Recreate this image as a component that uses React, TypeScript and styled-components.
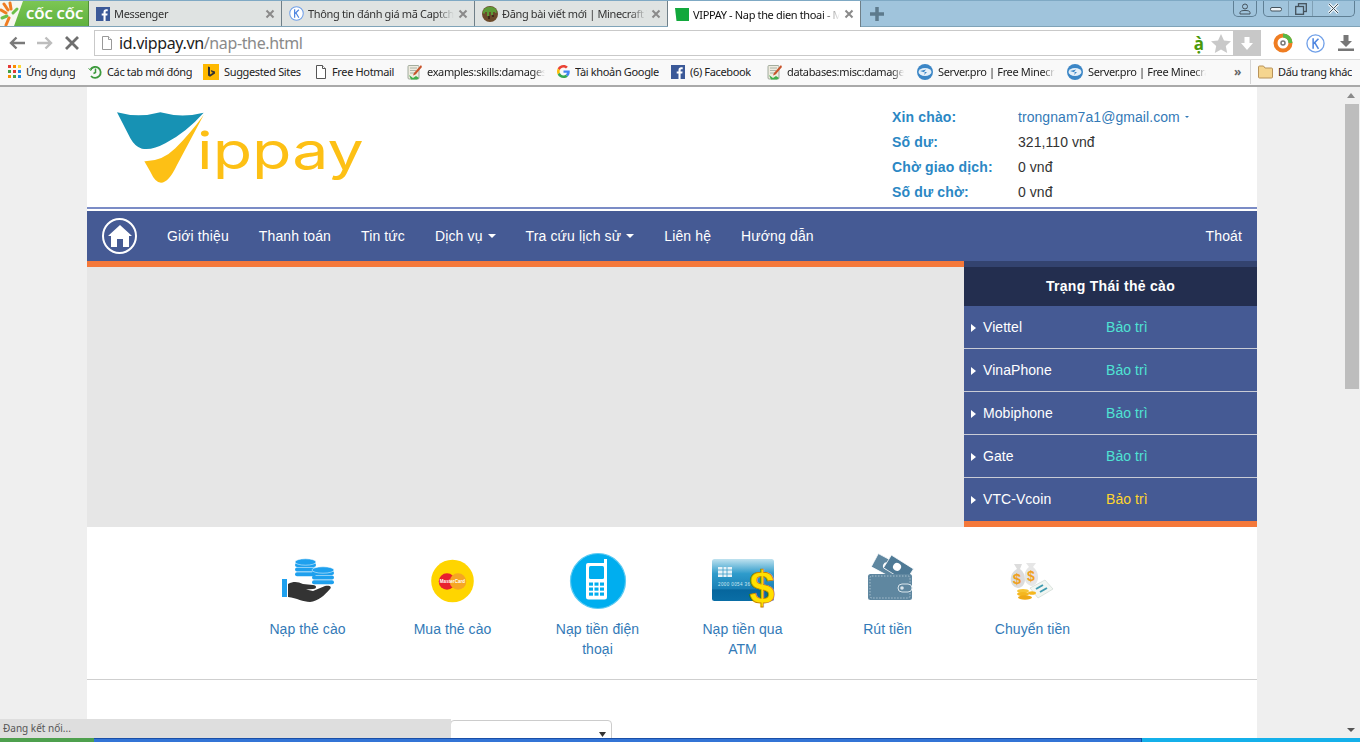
import React from "react";
import styled, { createGlobalStyle } from "styled-components";

const Global = createGlobalStyle`
  html, body { margin: 0; padding: 0; height: 100%; overflow: hidden; background: #efefef; }
  * { box-sizing: border-box; }
`;

const uiFont = `"Noto Sans", "Liberation Sans", sans-serif`;
const pageFont = `"Liberation Sans", Arial, sans-serif`;

const Screen = styled.div`
  position: relative; width: 1360px; height: 742px; overflow: hidden;
  display: flex; flex-direction: column; background: #efefef;
`;

/* ---------- browser chrome ---------- */
const TabStrip = styled.div`
  height: 27px; flex: none; display: flex; background: #a0c4dc;
  border-top: 1px solid #7fa9c4; border-bottom: 1px solid #7fa3b8;
`;
const Brand = styled.div`
  width: 89px; flex: none; display: flex; align-items: center; gap: 3px; padding-left: 0;
  background: linear-gradient(#7cc653, #5fb13f); border-right: 1px solid #4f8f38;
`;
const BrandName = styled.span`
  font: bold 13px ${uiFont}; color: #fff; white-space: nowrap; letter-spacing: 0.1px;
`;
const Tab = styled.div<{ $active?: boolean }>`
  width: 193px; flex: none; display: flex; align-items: center; padding: 0 6px 0 7px; gap: 4px;
  background: ${(p) => (p.$active ? "#ffffff" : "#dfe3e2")};
  border-right: 1px solid #6f7f88; height: ${(p) => (p.$active ? "26px" : "25px")};
  font: 11px ${uiFont}; letter-spacing: -0.35px; color: ${(p) => (p.$active ? "#111" : "#333")};
`;
const TabTitle = styled.span`
  flex: 1; min-width: 0; white-space: nowrap; overflow: hidden;
  -webkit-mask-image: linear-gradient(90deg, #000 88%, transparent);
  mask-image: linear-gradient(90deg, #000 88%, transparent);
`;
const Plus = styled.div`
  width: 32px; height: 25px; display: flex; align-items: center; justify-content: center;
`;
const WinControls = styled.div`
  margin-left: auto; display: flex; padding-right: 5px; align-items: flex-start; gap: 6px;
`;
const WinGroup = styled.div`
  display: flex; height: 16px; border: 1px solid #5f7f94; border-top: none;
  border-radius: 0 0 5px 5px;
`;
const WinButton = styled.div<{ $w: number }>`
  width: ${(p) => p.$w}px; display: flex; align-items: center; justify-content: center;
  & + & { border-left: 1px solid #7f9fb4; }
`;

const AddressRow = styled.div`
  height: 32px; flex: none; display: flex; align-items: center; background: #fff; padding-right: 0;
`;
const NavGlyphs = styled.div`
  width: 94px; flex: none; display: flex; align-items: center; padding-left: 8px; gap: 10px;
`;
const AddressBox = styled.div`
  width: 1167px; height: 26px; flex: none; display: flex; align-items: center;
  border: 1px solid #c9c9c9; border-right: none; padding-left: 6px; background: #fff;
`;
const Url = styled.div`
  margin-left: 6px; font: 16px ${uiFont}; color: #222; letter-spacing: -0.36px;
  span { color: #8a8a8a; }
`;
const Ime = styled.span`
  margin-left: auto; font: bold 17px ${uiFont}; color: #4c9a0a; line-height: 1; margin-right: 7px;
`;
const GreyDown = styled.div`
  width: 28px; height: 26px; margin-left: 2px; margin-top: -1px; margin-bottom: -1px;
  background: #c8c8c8; display: flex; align-items: center; justify-content: center;
`;
const RightIcons = styled.div`
  flex: 1; display: flex; align-items: center; padding-left: 12px; gap: 13px;
`;

const BookmarkBar = styled.div`
  height: 28px; flex: none; display: flex; align-items: center; padding: 0 0 2px 8px;
  background: #f9f9f9; border-top: 1px solid #dcdcdc; border-bottom: 2px solid #a9a9a9;
  font: 11px ${uiFont}; letter-spacing: -0.35px; color: #222;
`;
const Bookmark = styled.div<{ $w: number; $tw?: number }>`
  width: ${(p) => p.$w}px; flex: none; display: flex; align-items: center; gap: 5px;
  span {
    white-space: nowrap; overflow: hidden;
    ${(p) => p.$tw ? `width: ${p.$tw}px; -webkit-mask-image: linear-gradient(90deg,#000 90%,transparent); mask-image: linear-gradient(90deg,#000 90%,transparent);` : ""}
  }
  svg { flex: none; }
`;
const Chevrons = styled.div`
  width: 16px; flex: none; font: bold 12px ${uiFont}; color: #666; margin-left: 21px;
`;
const Divider = styled.div`
  width: 1px; height: 24px; background: #d5d5d5; margin-right: 7px; flex: none;
`;

/* ---------- viewport ---------- */
const Viewport = styled.div`
  flex: 1; min-height: 0; display: flex; overflow: hidden;
`;
const PageArea = styled.div`
  flex: 1; min-width: 0; overflow: hidden; padding-left: 87px;
`;
const Page = styled.div`
  width: 1170px; background: #fff; font: 14px ${pageFont}; letter-spacing: 0.06px;
  min-height: 700px;
`;
const Header = styled.header`
  height: 122px; display: flex; justify-content: space-between;
  border-bottom: 2px solid #7b8cc6;
`;
const LogoMark = styled.svg`
  width: 300px; height: 120px; margin-top: 3px; flex: none;
`;
const UserInfo = styled.dl`
  width: 365px; margin: 17px 0 0; display: grid; grid-template-columns: 126px 1fr;
  grid-auto-rows: 25px; align-items: center;
`;
const InfoLabel = styled.dt`
  font-weight: bold; color: #2a87c4; letter-spacing: 0.15px;
`;
const InfoValue = styled.dd<{ $link?: boolean }>`
  margin: 0; color: ${(p) => (p.$link ? "#337ab7" : "#333")};
  display: flex; align-items: center; gap: 5px;
`;
const TinyCaret = styled.i`
  width: 0; height: 0; border: 2px solid transparent; border-top: 2px solid #337ab7; margin-top: 3px;
`;
const NavBar = styled.nav`
  margin-top: 2px; height: 50px; display: flex; align-items: center; padding-left: 15px;
  background: #455a94; color: #fff; letter-spacing: 0.13px;
`;
const HomeBadge = styled.div`
  width: 35px; height: 36px; border-radius: 50%; border: 2px solid #fff; margin-right: 15px; flex: none;
  display: flex; align-items: center; justify-content: center;
`;
const NavLink = styled.a<{ $end?: boolean }>`
  padding: 0 15px; white-space: nowrap; display: flex; align-items: center; gap: 5px;
  margin-left: ${(p) => (p.$end ? "auto" : "0")};
`;
const Caret = styled.i`
  width: 0; height: 0; border: 4px solid transparent; border-top: 4px solid #fff; border-bottom: none;
`;
const Hero = styled.section`
  height: 266px; display: flex; background: #e6e6e6; border-top: 6px solid #f4783a;
`;
const HeroSpace = styled.div`flex: 1;`;
const StatusPanel = styled.aside`
  width: 293px; flex: none; margin-top: -6px; display: flex; flex-direction: column;
  background: #455a94; color: #fff; border-top: 6px solid #33436f; border-bottom: 6px solid #f4783a;
`;
const PanelHead = styled.div`
  height: 39px; display: flex; align-items: center; justify-content: center; padding-bottom: 2px;
  background: #232e4f; font-weight: bold; letter-spacing: 0.3px;
`;
const StatusRow = styled.div`
  height: 43px; display: flex; align-items: center; padding-left: 7px;
  border-bottom: 1px solid #c9ccd6;
  &:last-child { border-bottom-color: transparent; }
`;
const Bullet = styled.i`
  width: 0; height: 0; border: 4px solid transparent; border-left: 5px solid #fff; border-right: none;
  margin-right: 7px; margin-top: 2px;
`;
const CardName = styled.span`width: 123px; flex: none;`;
const CardState = styled.span<{ $warn?: boolean }>`
  color: ${(p) => (p.$warn ? "#ffd52e" : "#4fe3d3")};
`;
const Services = styled.section`
  height: 153px; display: grid; grid-template-columns: repeat(6, 145px); padding: 24px 0 0 148px;
  border-bottom: 1px solid #cfcfcf; align-content: start;
`;
const Service = styled.a`
  display: flex; flex-direction: column; align-items: center; text-align: center;
  color: #337ab7; line-height: 20px;
  svg { display: block; margin-bottom: 8px; }
  span { display: block; width: 100px; }
`;
const SelectRow = styled.div`
  padding: 40px 0 0 363px;
`;
const FakeSelect = styled.div`
  width: 162px; height: 34px; border: 1px solid #ccc; border-radius: 4px; background: #fff;
  display: flex; justify-content: flex-end; padding: 11px 5px 0 0;
`;
const Scrollbar = styled.div`
  width: 15px; flex: none; background: #efefef; display: flex; flex-direction: column; align-items: flex-start;
  position: relative; padding-top: 17px;
`;
const Thumb = styled.div`
  width: 14px; height: 285px; background: #bdbdbd;
`;
const ArrowUp = styled.i`
  position: absolute; top: 6px; left: 2px; width: 0; height: 0;
  border: 4px solid transparent; border-bottom: 5px solid #8a8a8a; border-top: none;
`;
const ArrowDown = styled.i`
  position: absolute; bottom: 6px; left: 2px; width: 0; height: 0;
  border: 4px solid transparent; border-top: 4px solid #555; border-bottom: none;
`;
const StatusBubble = styled.div`
  position: absolute; left: 0; bottom: 4px; width: 451px; height: 19px; background: #dedede;
  font: 10px/19px ${uiFont}; color: #555; padding-left: 3px;
`;
const Taskbar = styled.div`
  height: 4px; flex: none; display: flex; background: #2f6fd0; position: relative; z-index: 1;
`;
const TaskStart = styled.div`width: 94px; background: #4ea04e;`;
const TaskMid = styled.div`flex: 1; background: #3274d6; border-top: 1px solid #1a4fa8;`;
const TaskTray = styled.div`width: 219px; background: #14b0ea; border-left: 1px solid #0c4f9e;`;

/* ---------- icons ---------- */
const FbIcon = () => (
  <svg width="14" height="14" viewBox="0 0 14 14">
    <rect width="14" height="14" fill="#3b5998" />
    <path d="M9.6 14V8.6h1.7l.3-2.1h-2V5.2c0-.6.2-1 1-1h1.1V2.3C11.5 2.2 10.9 2.2 10.2 2.2 8.600 2.200 7.500 3.200 7.500 5v1.500H5.700v2.100h1.800V14z" fill="#fff" />
  </svg>
);
const KIcon = ({ size = 15 }: { size?: number }) => (
  <svg width={size} height={size} viewBox="0 0 16 16" fill="none">
    <circle cx="8" cy="8" r="7.2" stroke="#6f9fe8" strokeWidth="1.100" fill="#fff" />
    <path d="M6 3.500v9M6 8.500 10.500 4M7.500 7.500l3 5" stroke="#4f86e0" strokeWidth="1.300" />
  </svg>
);
const MinecraftIcon = () => (
  <svg width="16" height="16" viewBox="0 0 16 16">
    <circle cx="8" cy="8" r="8" fill="#6b4a2b" />
    <path d="M1.500 4A8 8 0 0 1 14.500 4V7H13V6H11V9H9V6H7V10H5V6H3V7.500H.5Z" fill="#5d9a36" />
    <path d="M6 10h2v3H6zM10 9h2v2h-2z" fill="#3f2b18" />
  </svg>
);
const VippayFav = () => (
  <svg width="14" height="13" viewBox="0 0 14 13"><path d="M0 0H14V13H1.500Z" fill="#12a83c" /></svg>
);
const CloseX = () => (
  <svg width="10" height="10" viewBox="0 0 10 10"><path d="M1.500 1.500l7 7M8.500 1.500l-7 7" stroke="#8a8a8a" strokeWidth="2" /></svg>
);
const DocIcon = ({ color = "#555" }: { color?: string }) => (
  <svg width="12" height="14" viewBox="0 0 12 14" fill="#fff">
    <path d="M1.500.5H7.500L10.500 3.500V13.500H1.500Z" stroke={color} />
    <path d="M7.500.5V3.500H10.500" stroke={color} />
  </svg>
);
const AppsIcon = () => {
  const colors = ["#e53935", "#fb8c00", "#fdd835", "#43a047", "#e53935", "#1e88e5", "#fb8c00", "#43a047", "#1e88e5"];
  return (
    <svg width="13" height="13" viewBox="0 0 13 13">
      {colors.map((c, i) => (
        <rect key={i} x={(i % 3) * 5} y={Math.floor(i / 3) * 5} width="3" height="3" fill={c} />
      ))}
    </svg>
  );
};
const HistoryIcon = () => (
  <svg width="14" height="14" viewBox="0 0 14 14" fill="none" stroke="#3d9a3d" strokeWidth="1.800">
    <path d="M2.500 4.500A5.500 5.500 0 1 1 3 11" />
    <path d="M7.500 3.500V7.500L5.500 8.500" strokeWidth="1.500" />
    <path d="M.5 3.500l2.500 2 1.500-3" strokeWidth="1" />
  </svg>
);
const BingIcon = () => (
  <svg width="16" height="16" viewBox="0 0 16 16">
    <rect width="16" height="16" fill="#ffb900" />
    <path d="M5 2.500 7 3.200V10.500L10 8.800 8.500 8 7.700 6 12 7.500V9.500L7 12.700 5 11.500Z" fill="#333" />
  </svg>
);
const NoteIcon = () => (
  <svg width="15" height="16" viewBox="0 0 15 16">
    <rect x="1" y="1.500" width="11" height="13.500" rx="1" fill="#efece0" stroke="#8e9a8a" strokeWidth=".8" />
    <path d="M3 4h7M3 6.500h6M3 9h7" stroke="#9aa69a" strokeWidth=".8" />
    <path d="M14 1 7 9l-1 2.500L8.500 10.500 15 3Z" fill="#c8532a" />
    <path d="M2 11l4 3 3-2 3 2-2 1.500H4Z" fill="#3fae49" />
  </svg>
);
const GoogleIcon = () => (
  <svg width="13" height="13" viewBox="0 0 48 48">
    <path fill="#ea4335" d="M24 9.500c3.500 0 6.700 1.300 9.100 3.500l6.800-6.800C35.800 2.400 30.300 0 24 0 14.600 0 6.500 5.400 2.600 13.200l7.900 6.200C12.400 13.600 17.700 9.500 24 9.500z" />
    <path fill="#4285f4" d="M47 24.500c0-1.600-.1-3.100-.4-4.500H24v9h12.900c-.6 3-2.200 5.500-4.700 7.200l7.700 6C44.400 38.100 47 32 47 24.500z" />
    <path fill="#fbbc05" d="M10.500 28.600c-.5-1.500-.8-3-.8-4.600s.3-3.200.8-4.600l-7.900-6.200C.9 16.500 0 20.100 0 24s.9 7.500 2.600 10.800z" />
    <path fill="#34a853" d="M24 48c6.500 0 11.900-2.100 15.900-5.800l-7.700-6c-2.200 1.400-4.900 2.300-8.200 2.300-6.300 0-11.600-4.200-13.500-9.900l-7.900 6.200C6.500 42.600 14.600 48 24 48z" />
  </svg>
);
const ServerIcon = () => (
  <svg width="16" height="16" viewBox="0 0 16 16">
    <circle cx="8" cy="8" r="8" fill="#3b86c6" />
    <ellipse cx="8" cy="8" rx="6.500" ry="4" fill="#e6f0f8" />
    <path d="M3 7l6-1.500L7 8l3 0-3 3 1-2.500Z" fill="#3b86c6" />
  </svg>
);
const FolderIcon = () => (
  <svg width="15" height="14" viewBox="0 0 15 14">
    <path d="M.5 2A1 1 0 0 1 1.500 1H5.500L7 3H13.500A1 1 0 0 1 14.500 4V12A1 1 0 0 1 13.500 13H1.500A1 1 0 0 1 .5 12Z" fill="#f5d58f" stroke="#b8935a" />
  </svg>
);
const CoinStack = ({ x, top, w, n }: { x: number; top: number; w: number; n: number }) => (
  <g fill="#1ea0ee">
    {Array.from({ length: n }, (_, i) => (
      <rect key={i} x={x} y={top + 4 + i * 4.600} width={w} height="4" rx="2" />
    ))}
    <ellipse cx={x + w / 2} cy={top + 3} rx={w / 2} ry="3.200" stroke="#fff" strokeWidth=".5" />
  </g>
);
const HandCoins = () => (
  <svg width="60" height="60" viewBox="0 0 60 60">
    <CoinStack x={17} top={8} w={21} n={3} />
    <CoinStack x={34} top={16} w={22} n={3} />
    <rect x="4" y="28" width="5" height="18" fill="#1ea0ee" />
    <path d="M10 33C16 30 20 31 25 33L35 34C39 34 39 38 35 38L28 38.500 35 40 47 35C52 34 54 36 52 38 46 45 40 50 32 51 25 51 19 47 10 46Z" fill="#333" />
  </svg>
);
const MasterCardIcon = () => (
  <svg width="60" height="60" viewBox="0 0 60 60">
    <circle cx="29.500" cy="30" r="21.300" fill="#ffd500" />
    <circle cx="24" cy="30.500" r="8.300" fill="#e8202f" />
    <circle cx="35" cy="30.500" r="8.300" fill="#f6a623" />
    <text x="29.500" y="32" fontSize="4.500" fontWeight="bold" fontFamily="Liberation Sans" fill="#fff" textAnchor="middle">MasterCard</text>
  </svg>
);
const PhoneIcon = () => (
  <svg width="60" height="60" viewBox="0 0 60 60">
    <circle cx="30" cy="30" r="27.500" fill="#00aeef" stroke="#5ecbf3" strokeWidth="1.200" />
    <path d="M18 14A2 2 0 0 1 20 12H36V8H39V46A2.500 2.500 0 0 1 36.500 48.500H20.500A2.500 2.500 0 0 1 18 46Z" fill="#fff" />
    <rect x="21" y="15" width="15" height="13" rx="1.500" fill="#00aeef" />
    {[0, 1, 2, 3, 4, 5, 6, 7, 8].map((i) => (
      <rect key={i} x={21 + (i % 3) * 5.500} y={31.500 + Math.floor(i / 3) * 5} width="4" height="3.200" fill="#00aeef" />
    ))}
  </svg>
);
const AtmIcon = () => (
  <svg width="66" height="60" viewBox="0 0 66 60">
    <defs>
      <linearGradient id="atmFill" x1="0" y1="0" x2="0" y2="1">
        <stop offset="0" stopColor="#bfe2ef" />
        <stop offset=".35" stopColor="#2e9bcb" />
        <stop offset=".72" stopColor="#1a7fb5" />
        <stop offset=".73" stopColor="#06669d" />
        <stop offset="1" stopColor="#0a6ea6" />
      </linearGradient>
    </defs>
    <rect x="2" y="8" width="62" height="42" rx="2.500" fill="url(#atmFill)" />
    <rect x="8" y="16" width="14" height="10" fill="#e8f3f8" />
    <path d="M8 19h14M8 23h14M13 16v10M17 16v10" stroke="#3a9cc8" strokeWidth=".8" />
    <text x="8" y="35" fontSize="4.500" fontFamily="Liberation Sans" fill="#cfe8f2" letterSpacing=".4">2000 0054 36</text>
    <text x="52" y="53" fontSize="46" fontWeight="bold" fontFamily="Liberation Sans" fill="#ffe000" stroke="#c98200" strokeWidth=".8" textAnchor="middle">$</text>
  </svg>
);
const WalletIcon = () => (
  <svg width="60" height="60" viewBox="0 0 60 60">
    <g transform="rotate(28 28 18)">
      <rect x="14" y="8" width="26" height="15" fill="#5f87a0" stroke="#fff" strokeWidth=".7" />
      <circle cx="27" cy="15" r="3.500" fill="#fff" />
    </g>
    <g transform="rotate(32 40 20)">
      <rect x="26" y="10" width="26" height="15" fill="#4f7a96" stroke="#fff" strokeWidth=".7" />
      <circle cx="37" cy="17" r="4" fill="#fff" />
    </g>
    <rect x="10" y="23" width="44" height="26" rx="2.500" fill="#5f87a0" />
    <rect x="12" y="25" width="40" height="22" rx="2" fill="none" stroke="#c8d8e2" strokeWidth=".7" strokeDasharray="1.500 1.500" />
    <rect x="40" y="33" width="14" height="8" rx="4" fill="#5f87a0" stroke="#dbe6ec" strokeWidth="1" />
    <circle cx="44" cy="37" r="1.800" fill="#dbe6ec" />
  </svg>
);
const MoneyIcon = () => (
  <svg width="60" height="60" viewBox="0 0 60 60">
    <path d="M14 18 11 13H19L17 18C24 23 24 36 15 37 6 36 5 23 14 18Z" fill="#dcdcdc" />
    <path d="M26 16 23 12H33L30 16C37 21 37 33 29 35 20 34 19 21 26 16Z" fill="#e6e6e6" />
    <text x="14" y="33" fontSize="15" fontWeight="bold" fontFamily="Liberation Sans" fill="#f0a01e" textAnchor="middle">$</text>
    <text x="28" y="30" fontSize="14" fontWeight="bold" fontFamily="Liberation Sans" fill="#f0a01e" textAnchor="middle">$</text>
    <path d="M27 37 42 29 50 38 35 47Z" fill="#f2f6f2" stroke="#c8d4cc" strokeWidth=".6" />
    <path d="M33 38l7-4M37 41l7-4" stroke="#3f9bb0" strokeWidth="2" />
    <ellipse cx="20" cy="40" rx="6" ry="2" fill="#f7c535" />
    <ellipse cx="20" cy="43" rx="6" ry="2" fill="#f5b71f" />
    <ellipse cx="22" cy="46.500" rx="7" ry="2.200" fill="#efa915" />
    <ellipse cx="29" cy="42" rx="4" ry="1.800" fill="#f5b71f" />
  </svg>
);

const tabs = [
  { icon: <FbIcon />, title: "Messenger" },
  { icon: <KIcon />, title: "Thông tin đánh giá mã Captcha" },
  { icon: <MinecraftIcon />, title: "Đăng bài viết mới | Minecraft Việt Nam" },
  { icon: <VippayFav />, title: "VIPPAY - Nap the dien thoai - Mua the", active: true },
];
const bookmarks = [
  { w: 80, icon: <AppsIcon />, t: "Ứng dụng" },
  { w: 115, icon: <HistoryIcon />, t: "Các tab mới đóng" },
  { w: 112, icon: <BingIcon />, t: "Suggested Sites" },
  { w: 92, icon: <DocIcon />, t: "Free Hotmail" },
  { w: 150, icon: <NoteIcon />, t: "examples:skills:damages", tw: 118 },
  { w: 114, icon: <GoogleIcon />, t: "Tài khoản Google" },
  { w: 96, icon: <FbIcon />, t: "(6) Facebook" },
  { w: 150, icon: <NoteIcon />, t: "databases:misc:damage", tw: 117 },
  { w: 150, icon: <ServerIcon />, t: "Server.pro | Free Minecraft", tw: 117 },
  { w: 146, icon: <ServerIcon />, t: "Server.pro | Free Minecraft", tw: 118 },
];
const navItems = [
  { t: "Giới thiệu" }, { t: "Thanh toán" }, { t: "Tin tức" }, { t: "Dịch vụ", c: true },
  { t: "Tra cứu lịch sử", c: true }, { t: "Liên hệ" }, { t: "Hướng dẫn" },
];
const cards = [
  { n: "Viettel" }, { n: "VinaPhone" }, { n: "Mobiphone" }, { n: "Gate" }, { n: "VTC-Vcoin", warn: true },
];
const services = [
  { icon: <HandCoins />, t: "Nạp thẻ cào" },
  { icon: <MasterCardIcon />, t: "Mua thẻ cào" },
  { icon: <PhoneIcon />, t: "Nạp tiền điện thoại" },
  { icon: <AtmIcon />, t: "Nạp tiền qua ATM" },
  { icon: <WalletIcon />, t: "Rút tiền" },
  { icon: <MoneyIcon />, t: "Chuyển tiền" },
];

export default function App() {
  return (
    <Screen>
      <Global />
      <TabStrip>
        <Brand>
          <svg width="23" height="25" viewBox="0 0 23 25">
            <path d="M0 0H23L14 25H0Z" fill="#f7f7f0" />
            <g stroke="#ef7d22" strokeWidth="3" strokeLinecap="round">
              <path d="M4 3 8 9M10 2 11 8M1 9 6 12" />
            </g>
            <g stroke="#6cc04a" strokeWidth="3" strokeLinecap="round">
              <path d="M13 12 17 8M2 17 7 15" />
            </g>
            <path d="M6 24 9 17" stroke="#ef7d22" strokeWidth="3" strokeLinecap="round" />
          </svg>
          <BrandName>CỐC CỐC</BrandName>
        </Brand>
        {tabs.map((tab) => (
          <Tab key={tab.title} $active={tab.active}>
            {tab.icon}
            <TabTitle>{tab.title}</TabTitle>
            <CloseX />
          </Tab>
        ))}
        <Plus>
          <svg width="14" height="14" viewBox="0 0 14 14"><path d="M7 0v14M0 7h14" stroke="#5d7a8c" strokeWidth="3.500" /></svg>
        </Plus>
        <WinControls>
          <WinGroup>
            <WinButton $w={22}>
              <svg width="12" height="12" viewBox="0 0 12 12" fill="none" stroke="#44525c"><circle cx="6" cy="3.500" r="2.500" /><path d="M1 11V9.500C1 8 3 7.500 6 7.500S11 8 11 9.500V11Z" /></svg>
            </WinButton>
          </WinGroup>
          <WinGroup>
            <WinButton $w={24}>
              <svg width="12" height="6" viewBox="0 0 12 6"><rect x=".5" y="1.500" width="11" height="3.500" rx="1.500" fill="#eef4f8" stroke="#44525c" /></svg>
            </WinButton>
            <WinButton $w={24}>
              <svg width="12" height="12" viewBox="0 0 12 12" fill="none" stroke="#44525c" strokeWidth="1.300"><rect x="3.500" y=".7" width="7.800" height="7.800" /><rect x=".7" y="3.500" width="7.800" height="7.800" fill="#a0c4dc" /></svg>
            </WinButton>
            <WinButton $w={42}>
              <svg width="13" height="11" viewBox="0 0 13 11"><path d="M2 1l9 9M11 1l-9 9" stroke="#eef4f8" strokeWidth="3" /><path d="M2 1l9 9M11 1l-9 9" stroke="#44525c" strokeWidth="1" /></svg>
            </WinButton>
          </WinGroup>
        </WinControls>
      </TabStrip>

      <AddressRow>
        <NavGlyphs>
          <svg width="18" height="14" viewBox="0 0 18 14" fill="none" stroke="#7a7a7a" strokeWidth="2.400"><path d="M17 7H3M8.500 1.500 3 7l5.500 5.500" /></svg>
          <svg width="18" height="14" viewBox="0 0 18 14" fill="none" stroke="#bdbdbd" strokeWidth="2.400"><path d="M1 7h14M9.500 1.500 15 7l-5.500 5.500" /></svg>
          <svg width="16" height="14" viewBox="0 0 16 14" fill="none" stroke="#6e6e6e" strokeWidth="2.800"><path d="M2 1l12 12M14 1 2 13" /></svg>
        </NavGlyphs>
        <AddressBox>
          <DocIcon color="#999" />
          <Url>id.vippay.vn<span>/nap-the.html</span></Url>
          <Ime>ạ̀</Ime>
          <svg width="20" height="19" viewBox="0 0 20 19"><path d="M10 0l3 6.500 7 .8-5.200 4.800L16.200 19 10 15.500 3.800 19l1.400-6.900L0 7.300l7-.8Z" fill="#c9c9c9" /></svg>
          <GreyDown>
            <svg width="12" height="13" viewBox="0 0 12 13"><path d="M3.500 0h5v6H12L6 13 0 6h3.500Z" fill="#fff" /></svg>
          </GreyDown>
        </AddressBox>
        <RightIcons>
          <svg width="20" height="20" viewBox="0 0 20 20" fill="none">
            <circle cx="10" cy="10" r="7.500" stroke="#ef7d22" strokeWidth="4" />
            <path d="M10 2.500A7.500 7.500 0 0 1 17.500 10" stroke="#58b947" strokeWidth="4" />
            <circle cx="10" cy="10" r="2" stroke="#777" strokeWidth="1.500" />
          </svg>
          <KIcon size={19} />
          <svg width="16" height="16" viewBox="0 0 16 16" fill="#777"><path d="M5.500 0h5v6H14L8 12 2 6h3.500ZM0 13.500h16V16H0Z" /></svg>
        </RightIcons>
      </AddressRow>

      <BookmarkBar>
        {bookmarks.map((b, i) => (
          <Bookmark key={i} $w={b.w} $tw={b.tw}>
            {b.icon}
            <span>{b.t}</span>
          </Bookmark>
        ))}
        <Chevrons>»</Chevrons>
        <Divider />
        <Bookmark $w={96}>
          <FolderIcon />
          <span>Dấu trang khác</span>
        </Bookmark>
      </BookmarkBar>

      <Viewport>
        <PageArea>
          <Page>
            <Header>
              <LogoMark viewBox="0 0 900 360">
                <path d="M90 67Q155 85 220 67 285 85 350 68 300 125 235 160 195 182 165 176 145 172 130 145Z" fill="#1792b4" />
                <path d="M350 75Q310 150 270 225 245 278 222 278 205 278 190 245L172 214Q225 215 265 175 310 130 350 75Z" fill="#fdc015" />
                <text x="330" y="236" fontFamily="Inter, Liberation Sans" fontWeight="400" fontSize="155" fill="#fdc015" textLength="500" lengthAdjust="spacingAndGlyphs">ippay</text>
              </LogoMark>
              <UserInfo>
                <InfoLabel>Xin chào:</InfoLabel>
                <InfoValue $link>trongnam7a1@gmail.com <TinyCaret /></InfoValue>
                <InfoLabel>Số dư:</InfoLabel>
                <InfoValue>321,110 vnđ</InfoValue>
                <InfoLabel>Chờ giao dịch:</InfoLabel>
                <InfoValue>0 vnđ</InfoValue>
                <InfoLabel>Số dư chờ:</InfoLabel>
                <InfoValue>0 vnđ</InfoValue>
              </UserInfo>
            </Header>
            <NavBar>
              <HomeBadge>
                <svg width="24" height="22" viewBox="0 0 24 22" fill="#fff">
                  <path d="M12 0 24 11H21V22H15V14H9V22H3V11H0Z" />
                </svg>
              </HomeBadge>
              {navItems.map((n) => (
                <NavLink key={n.t}>{n.t}{n.c && <Caret />}</NavLink>
              ))}
              <NavLink $end>Thoát</NavLink>
            </NavBar>
            <Hero>
              <HeroSpace />
              <StatusPanel>
                <PanelHead>Trạng Thái thẻ cào</PanelHead>
                {cards.map((c) => (
                  <StatusRow key={c.n}>
                    <Bullet />
                    <CardName>{c.n}</CardName>
                    <CardState $warn={c.warn}>Bảo trì</CardState>
                  </StatusRow>
                ))}
              </StatusPanel>
            </Hero>
            <Services>
              {services.map((s) => (
                <Service key={s.t}>
                  {s.icon}
                  <span>{s.t}</span>
                </Service>
              ))}
            </Services>
            <SelectRow>
              <FakeSelect>
                <svg width="7" height="5" viewBox="0 0 7 5"><path d="M0 0h7L3.500 5Z" fill="#333" /></svg>
              </FakeSelect>
            </SelectRow>
          </Page>
        </PageArea>
        <Scrollbar>
          <ArrowUp />
          <Thumb />
          <ArrowDown />
        </Scrollbar>
      </Viewport>
      <StatusBubble>Đang kết nối...</StatusBubble>
      <Taskbar>
        <TaskStart />
        <TaskMid />
        <TaskTray />
      </Taskbar>
    </Screen>
  );
}
